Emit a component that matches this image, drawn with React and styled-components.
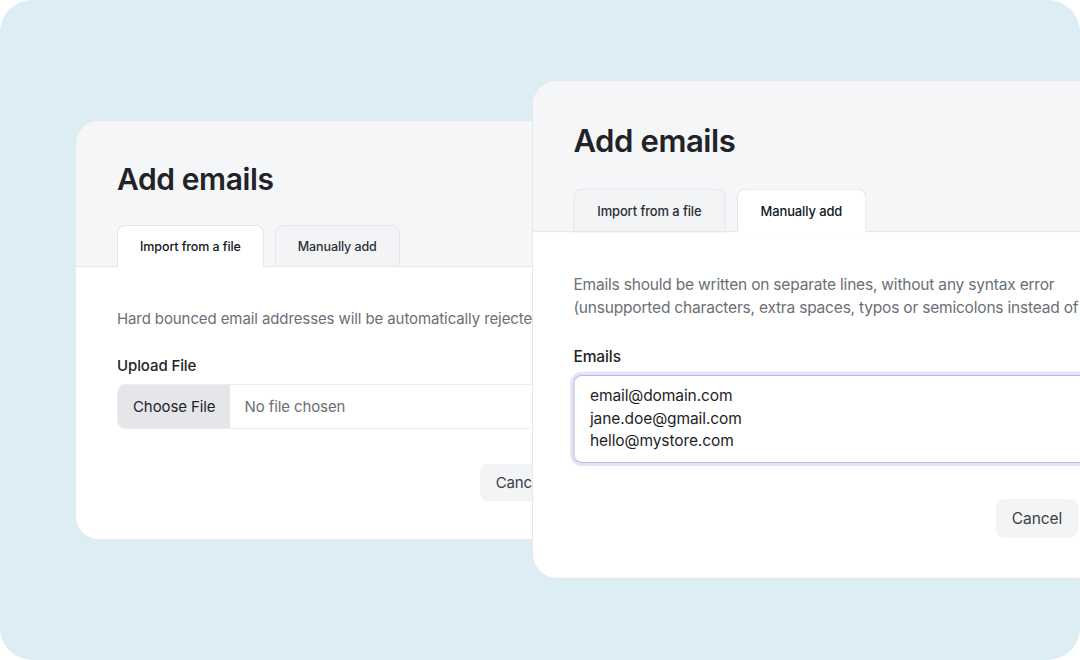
import styled, { createGlobalStyle } from 'styled-components'

const GlobalStyle = createGlobalStyle`
  html, body {
    margin: 0;
    padding: 0;
    background: #ffffff;
  }
  body {
    font-family: Inter, "Noto Sans", "Liberation Sans", sans-serif;
    color: #1f2937;
    letter-spacing: -0.1px;
  }
`

const Stage = styled.div`
  position: relative;
  width: 1080px;
  height: 660px;
  border-radius: 32px;
  background: #dcedf4;
  overflow: hidden;
`

// the two dialogs overlap like windows, so they are placed on the stage
const Card = styled.div`
  --pad: ${(p) => p.$pad}px;
  --pad-bottom: ${(p) => p.$padBottom || 38}px;
  position: absolute;
  left: ${(p) => p.$left}px;
  top: ${(p) => p.$top}px;
  width: ${(p) => p.$width}px;
  transform: scale(${(p) => p.$scale || 1});
  transform-origin: top left;
  background: #ffffff;
  border: 1px solid #e6e8eb;
  border-radius: 24px;
  overflow: hidden;
  box-sizing: border-box;
`

const Header = styled.div`
  background: #f5f6f8;
  padding: 40px var(--pad) 0;
  border-bottom: 1px solid #e5e7eb;
`

const Title = styled.h2`
  margin: 0 0 28px;
  font-size: 30px;
  line-height: 36px;
  font-weight: 600;
  color: #212327;
  letter-spacing: -0.4px;
`

const TabRow = styled.div`
  display: flex;
  gap: 11px;
  margin-bottom: -1px;
  position: relative;
`

const Tab = styled.div`
  height: 42px;
  box-sizing: border-box;
  padding: 0 22px;
  display: flex;
  align-items: center;
  font-size: 12.5px;
  font-weight: 500;
  color: ${(p) => (p.$active ? '#111827' : '#2b2f36')};
  background: ${(p) => (p.$active ? '#ffffff' : '#f3f4f6')};
  border: 1px solid #e5e7eb;
  border-bottom-color: ${(p) => (p.$active ? '#ffffff' : '#e5e7eb')};
  border-radius: 8px 8px 0 0;
`

const Body = styled.div`
  padding: 40px var(--pad) var(--pad-bottom);
`

const Hint = styled.p`
  margin: 0;
  font-size: 15px;
  line-height: ${(p) => (p.$tight ? 22 : 23)}px;
  letter-spacing: ${(p) => (p.$tight ? -0.2 : -0.1)}px;
  white-space: nowrap;
  color: #6b6f76;
`

const Label = styled.div`
  margin: 25px 0 7px;
  font-size: 15px;
  line-height: 22px;
  font-weight: 500;
  color: #1f2329;
`

const FileField = styled.div`
  display: flex;
  height: 45px;
  box-sizing: border-box;
  border: 1px solid #eceef1;
  border-radius: 8px;
  overflow: hidden;
  font-size: 15px;
`

const ChooseButton = styled.div`
  display: flex;
  align-items: center;
  padding: 0 15px;
  background: #e5e6ea;
  color: #1f2329;
`

const FileName = styled.div`
  display: flex;
  align-items: center;
  padding: 0 14px;
  color: #6b6f76;
`

const EmailBox = styled.textarea`
  display: block;
  width: 100%;
  height: 85px;
  box-sizing: border-box;
  padding: 8px 15px;
  border: 1px solid #bcb5e4;
  border-radius: 8px;
  box-shadow: 0 0 0 3px #e6e3f6;
  font-family: inherit;
  font-size: 15px;
  line-height: 22px;
  letter-spacing: -0.1px;
  color: #1f2329;
  resize: none;
  outline: none;
  overflow: hidden;
`

const Footer = styled.div`
  display: flex;
  justify-content: flex-end;
  gap: 8px;
  margin-top: 35px;
`

const Button = styled.button`
  height: 37px;
  padding: 0 16px;
  border: none;
  border-radius: 8px;
  background: ${(p) => (p.$primary ? '#5b4dd6' : '#f3f4f6')};
  color: ${(p) => (p.$primary ? '#ffffff' : '#3a3f47')};
  font-family: inherit;
  font-size: 15px;
  font-weight: ${(p) => (p.$primary ? 500 : 400)};
  letter-spacing: -0.1px;
  cursor: pointer;
`

function Tabs({ active }) {
  return (
    <TabRow>
      <Tab $active={active === 'file'}>Import from a file</Tab>
      <Tab $active={active === 'manual'}>Manually add</Tab>
    </TabRow>
  )
}

function Actions() {
  return (
    <Footer>
      <Button>Cancel</Button>
      <Button $primary>Add</Button>
    </Footer>
  )
}

export default function App() {
  return (
    <>
      <GlobalStyle />
      <Stage>
        <Card $left={75} $top={120} $width={596} $pad={41}>
          <Header>
            <Title>Add emails</Title>
            <Tabs active="file" />
          </Header>
          <Body>
            <Hint>Hard bounced email addresses will be automatically rejected.</Hint>
            <Label>Upload File</Label>
            <FileField>
              <ChooseButton>Choose File</ChooseButton>
              <FileName>No file chosen</FileName>
            </FileField>
            <Actions />
          </Body>
        </Card>

        <Card $left={532} $top={80} $width={637} $pad={39} $padBottom={39} $scale={1.035}>
          <Header>
            <Title>Add emails</Title>
            <Tabs active="manual" />
          </Header>
          <Body>
            <Hint $tight>
              Emails should be written on separate lines, without any syntax error
              <br />
              (unsupported characters, extra spaces, typos or semicolons instead of commas).
            </Hint>
            <Label>Emails</Label>
            <EmailBox
              readOnly
              defaultValue={'email@domain.com\njane.doe@gmail.com\nhello@mystore.com'}
            />
            <Actions />
          </Body>
        </Card>
      </Stage>
    </>
  )
}
